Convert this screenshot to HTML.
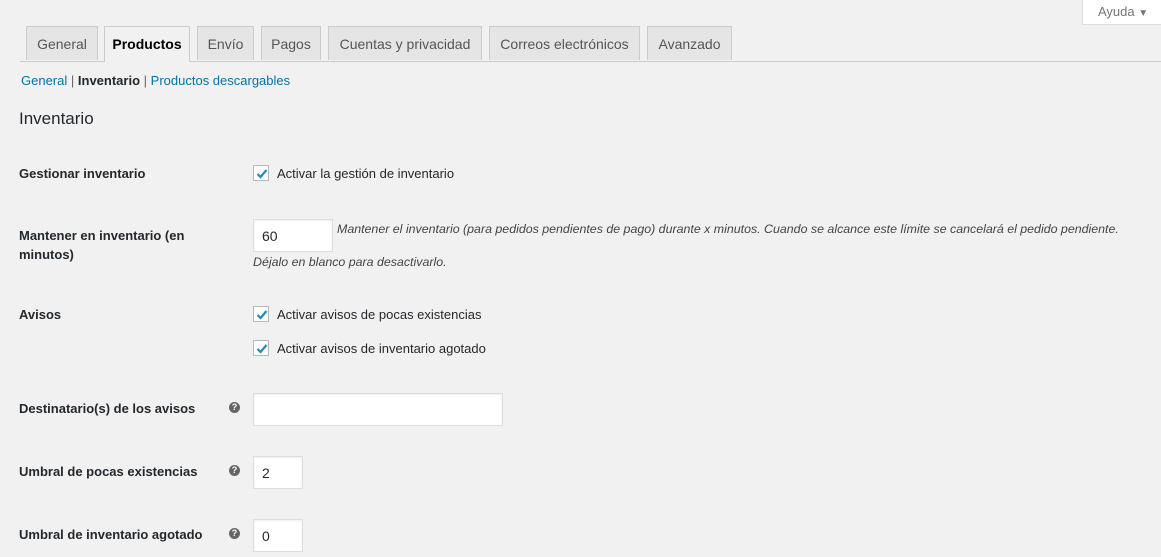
<!DOCTYPE html>
<html><head><meta charset="utf-8"><style>
body{margin:0;width:1161px;height:557px;background:#f1f1f1;font-family:"Liberation Sans",sans-serif;font-size:13px;color:#23282d;position:relative;overflow:hidden}
.a{position:absolute;white-space:nowrap}
.tab{position:absolute;top:26px;height:34px;background:#e5e5e5;border:1px solid #ccc;border-bottom:none;box-sizing:border-box;font-size:14px;color:#555;text-align:center;line-height:35px}
.tab.on{background:#f1f1f1;color:#000;height:36px;font-weight:bold}
.lbl{font-weight:bold;color:#23282d}
.cb{position:absolute;width:16px;height:16px;background:#fff;border:1px solid #b4b9be;box-sizing:border-box}
.cb svg{position:absolute;left:0;top:0}
.in{position:absolute;background:#fff;border:1px solid #ddd;box-sizing:border-box;box-shadow:inset 0 1px 2px rgba(0,0,0,.07);font-size:14px;padding-left:8px;line-height:32px}
.hp{position:absolute;width:11px;height:11px;border-radius:50%;background:#666;color:#fff;font-size:9px;font-weight:bold;text-align:center;line-height:11px}
i{color:#444}
a{color:#0073aa;text-decoration:none}
</style></head><body>
<div class="a" style="left:1082px;top:-1px;width:80px;height:26px;background:#fff;border:1px solid #ddd;box-sizing:border-box;color:#72777c;line-height:24px;padding-left:15px">Ayuda <span style="font-size:10px">▼</span></div>
<div class="a" style="left:20px;top:61px;width:1141px;height:1px;background:#ccc"></div>
<div class="tab" style="left:26px;width:72px">General</div>
<div class="tab on" style="left:104px;width:86px">Productos</div>
<div class="tab" style="left:197px;width:57px">Envío</div>
<div class="tab" style="left:261px;width:60px">Pagos</div>
<div class="tab" style="left:328px;width:154px">Cuentas y privacidad</div>
<div class="tab" style="left:489px;width:151px">Correos electrónicos</div>
<div class="tab" style="left:647px;width:85px">Avanzado</div>
<div class="a" style="left:21px;top:73px"><a>General</a> <span style="color:#666">|</span> <b>Inventario</b> <span style="color:#666">|</span> <a>Productos descargables</a></div>
<div class="a" style="left:19px;top:109px;font-size:17px">Inventario</div>

<div class="a lbl" style="left:19px;top:166px">Gestionar inventario</div>
<div class="cb" style="left:253px;top:165px"><svg width="16" height="16"><path d="M3.5 8 L6.5 11 L12.5 4" stroke="#1e8cbe" stroke-width="2.2" fill="none"/></svg></div>
<div class="a" style="left:277px;top:166px">Activar la gestión de inventario</div>

<div class="a lbl" style="left:19px;top:226px;line-height:19px">Mantener en inventario (en<br>minutos)</div>
<div class="in" style="left:253px;top:219px;width:80px;height:33px">60</div>
<div class="a" style="left:337px;top:222px;font-size:12.4px"><i>Mantener el inventario (para pedidos pendientes de pago) durante x minutos. Cuando se alcance este límite se cancelará el pedido pendiente.</i></div>
<div class="a" style="left:253px;top:255px;font-size:12.4px"><i>Déjalo en blanco para desactivarlo.</i></div>

<div class="a lbl" style="left:19px;top:307px">Avisos</div>
<div class="cb" style="left:253px;top:306px"><svg width="16" height="16"><path d="M3.5 8 L6.5 11 L12.5 4" stroke="#1e8cbe" stroke-width="2.2" fill="none"/></svg></div>
<div class="a" style="left:277px;top:307px">Activar avisos de pocas existencias</div>
<div class="cb" style="left:253px;top:340px"><svg width="16" height="16"><path d="M3.5 8 L6.5 11 L12.5 4" stroke="#1e8cbe" stroke-width="2.2" fill="none"/></svg></div>
<div class="a" style="left:277px;top:341px">Activar avisos de inventario agotado</div>

<div class="a lbl" style="left:19px;top:401px">Destinatario(s) de los avisos</div>
<div class="hp" style="left:229px;top:402px">?</div>
<div class="in" style="left:253px;top:393px;width:250px;height:33px"></div>

<div class="a lbl" style="left:19px;top:464px">Umbral de pocas existencias</div>
<div class="hp" style="left:229px;top:465px">?</div>
<div class="in" style="left:253px;top:456px;width:50px;height:33px">2</div>

<div class="a lbl" style="left:19px;top:527px">Umbral de inventario agotado</div>
<div class="hp" style="left:229px;top:528px">?</div>
<div class="in" style="left:253px;top:519px;width:50px;height:33px">0</div>
</body></html>
